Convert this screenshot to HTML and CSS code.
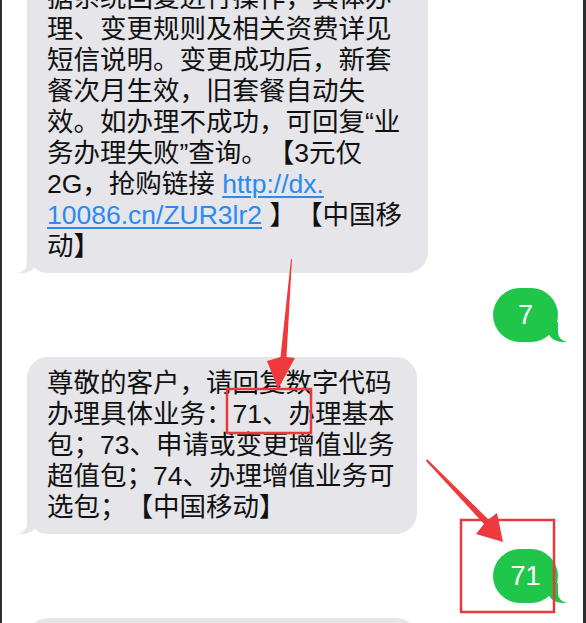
FILE: index.html
```html
<!DOCTYPE html>
<html lang="zh-CN">

<head>
    <meta charset="UTF-8">
    <meta name="viewport" content="width=device-width, initial-scale=1.0">
    <title>短信</title>
    <link rel="stylesheet" href="styles.css">
</head>

<body>

    <div class="screen">
        <div class="chat">
            <div class="bubble received wide">据系统回复进行操作，具体办<br>理、变更规则及相关资费详见<br>短信说明。变更成功后，新套<br>餐次月生效，旧套餐自动失<br>效。如办理不成功，可回复“业<br>务办理失败”查询。【3元仅<br>2G，抢购链接 <a class="link" href="#">http://dx.</a><br><a class="link" href="#">10086.cn/ZUR3lr2</a> 】【中国移<br>动】</div>

            <div class="bubble sent">7</div>

            <div class="bubble received">尊敬的客户，请回复数字代码<br>办理具体业务：71、办理基本<br>包；73、申请或变更增值业务<br>超值包；74、办理增值业务可<br>选包；【中国移动】</div>

            <div class="bubble sent">71</div>

            <div class="bubble received">尊敬的客户，您已成功办理<br>基本包业务。【中国移动】</div>
        </div>
    </div>

    <!-- 标注：红框和箭头 -->
    <svg class="marks" width="586" height="623" viewBox="0 0 586 623">
        <rect x="227" y="389" width="84" height="44" class="mark-box" />
        <rect x="461" y="520" width="93" height="92" class="mark-box" />
        <polygon class="mark-arrow" points="292,259 286.5,357 295,358 278,389 267,361 280.5,357 291,259" />
        <polygon class="mark-arrow" points="427,459 488.5,519.5 497,513 503,542 476,534 484,524 426,461" />
    </svg>

</body>

</html>
```

FILE: styles.css
```css
html,
body {
    margin: 0;
    padding: 0;
    height: 623px;
    overflow: hidden;
    background-color: #fff;
}

body {
    position: relative;
    font-family: "Liberation Sans", "Noto Sans CJK SC", sans-serif;
    color: #111;
}

.screen {
    box-sizing: border-box;
    width: 586px;
    height: 623px;
    overflow: hidden;
    border-left: 2px solid #2e2e2e;
    border-right: 3px solid #2e2e2e;
    background-color: #fff;
}

.chat {
    display: flex;
    flex-direction: column;
    gap: 15px;
    margin-top: -28px;
}

.bubble {
    position: relative;
    box-sizing: border-box;
    font-size: 26.5px;
    line-height: 31px;
    white-space: nowrap;
    text-spacing-trim: space-all;
}

.received {
    align-self: flex-start;
    margin-left: 25px;
    width: 390px;
    padding: 10.5px 20px 11.5px;
    background-color: #e5e5ea;
    border-radius: 21px;
}

.received.wide {
    width: 401px;
}

.received::before {
    content: "";
    position: absolute;
    bottom: 0;
    left: -9px;
    width: 20px;
    height: 20px;
    background-color: #e5e5ea;
    border-bottom-right-radius: 16px 14px;
}

.received::after {
    content: "";
    position: absolute;
    bottom: 0;
    left: -22px;
    width: 22px;
    height: 20px;
    background-color: #fff;
    border-bottom-right-radius: 10px;
}

.sent {
    align-self: flex-end;
    margin-right: 25px;
    width: 65px;
    height: 54px;
    display: flex;
    justify-content: center;
    align-items: center;
    background-color: #1fc64a;
    color: #fff;
    font-size: 27px;
    border-radius: 27px;
}

.sent::before {
    content: "";
    position: absolute;
    bottom: 0;
    right: -9px;
    width: 20px;
    height: 20px;
    background-color: #1fc64a;
    border-bottom-left-radius: 16px 14px;
}

.sent::after {
    content: "";
    position: absolute;
    bottom: 0;
    right: -22px;
    width: 22px;
    height: 20px;
    background-color: #fff;
    border-bottom-left-radius: 10px;
}

.link {
    color: #2a8af0;
    text-decoration: underline;
    text-decoration-thickness: 1.5px;
    text-underline-offset: 3px;
}

.marks {
    position: absolute;
    top: 0;
    left: 0;
    pointer-events: none;
}

.mark-box {
    fill: none;
    stroke: #e8393c;
    stroke-width: 2.5;
}

.mark-arrow {
    fill: #ee3a3d;
}
```
